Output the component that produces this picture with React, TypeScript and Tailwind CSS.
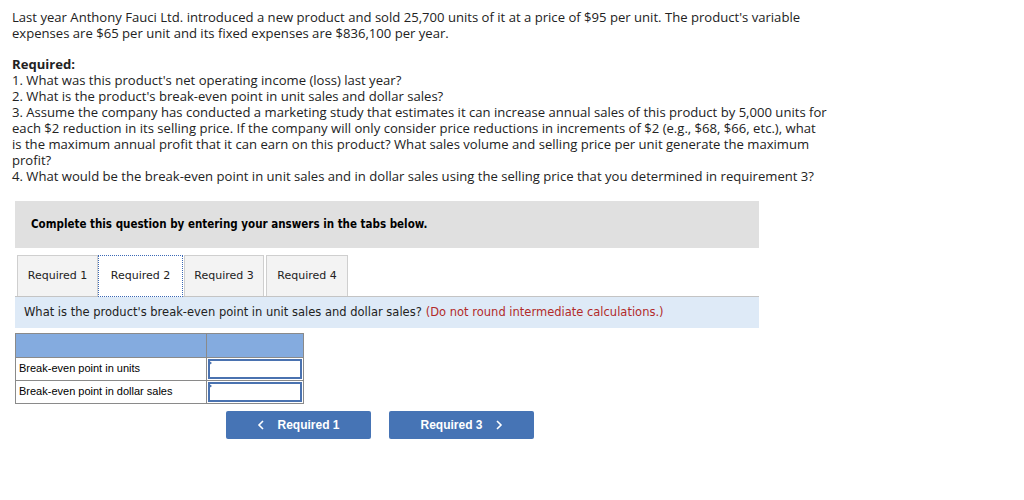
import React from "react";

const body = { fontFamily: '"Open Sans", "Liberation Sans", sans-serif' };
const verdana = { fontFamily: '"DejaVu Sans", Verdana, sans-serif' };
const verdanaC = { fontFamily: '"DejaVu Sans Condensed", "DejaVu Sans", Verdana, sans-serif' };
const arial = { fontFamily: '"Liberation Sans", Arial, sans-serif' };

function Tab({ label, active, cls }: { label: string; active?: boolean; cls: string }) {
  if (active) {
    return (
      <div className={`h-[42px] bg-white border border-dotted border-[#3b68b5] flex items-center justify-center text-[11px] text-[#222] mb-[-1px] ${cls}`} style={verdana}>
        {label}
      </div>
    );
  }
  return (
    <div className={`h-[41px] bg-[#f3f3f3] border border-[#cfcfcf] border-b-0 flex items-center justify-center text-[11px] text-[#222] ${cls}`} style={verdana}>
      {label}
    </div>
  );
}

function InputCell() {
  return (
    <div className="relative h-[22px] border-l border-[#8a8a8a] p-[1px]">
      <div className="h-full border-2 border-[#4a72b0] bg-white" />
      <div className="absolute left-[1px] top-[2px] w-0 h-0 border-t-[3px] border-b-[3px] border-l-[4px] border-t-transparent border-b-transparent border-l-[#4a72b0]" />
    </div>
  );
}

function Chevron({ dir }: { dir: "l" | "r" }) {
  return (
    <svg width="8" height="10" viewBox="0 0 8 10" fill="none" stroke="white" strokeWidth="1.6">
      {dir === "l" ? <path d="M6 1 L2 5 L6 9" /> : <path d="M2 1 L6 5 L2 9" />}
    </svg>
  );
}

export default function App() {
  return (
    <div className="w-[1024px] h-[500px] bg-white text-[#222] pt-[9px] pl-[12px]">
      <div className="text-[13.1px] leading-[16px] w-[840px]" style={body}>
        <p>
          Last year Anthony Fauci Ltd. introduced a new product and sold 25,700 units of it at a price of $95 per unit. The product's variable
          <br />
          expenses are $65 per unit and its fixed expenses are $836,100 per year.
        </p>
        <div className="mt-[15px]">
          <p className="font-bold">Required:</p>
          <p>1. What was this product's net operating income (loss) last year?</p>
          <p>2. What is the product's break-even point in unit sales and dollar sales?</p>
          <p>
            3. Assume the company has conducted a marketing study that estimates it can increase annual sales of this product by 5,000 units for
            <br />
            each $2 reduction in its selling price. If the company will only consider price reductions in increments of $2 (e.g., $68, $66, etc.), what
            <br />
            is the maximum annual profit that it can earn on this product? What sales volume and selling price per unit generate the maximum
            <br />
            profit?
          </p>
          <p>4. What would be the break-even point in unit sales and in dollar sales using the selling price that you determined in requirement 3?</p>
        </div>
      </div>

      <div className="ml-[3px] mt-[17px] w-[744px]">
        <div className="h-[47px] bg-[#e0e0e0] flex items-center pl-[16px] text-[11.5px] font-bold text-black" style={verdanaC}>
          Complete this question by entering your answers in the tabs below.
        </div>
        <div className="mt-[7px] flex items-end">
          <Tab label="Required 1" cls="ml-[2px] w-[81px]" />
          <Tab label="Required 2" active cls="w-[85px]" />
          <Tab label="Required 3" cls="ml-[1px] w-[80px]" />
          <Tab label="Required 4" cls="ml-[2px] w-[82px]" />
        </div>
        <div className="border-t border-[#c4c4c4] bg-[#deeaf7] h-[32px] flex items-center pl-[9px] text-[11.5px]" style={verdana}>
          <span className="text-[#222]">What is the product's break-even point in unit sales and dollar sales?</span>
          <span className="text-[#b22a2a] ml-[4px]">(Do not round intermediate calculations.)</span>
        </div>

        <div className="mt-[5px] w-[289px] border border-[#8a8a8a] text-[11px]" style={arial}>
          <div className="grid grid-cols-[190px_1fr] h-[24px] bg-[#84abdf] border-b border-[#8a8a8a]">
            <div />
            <div className="border-l border-[#8a8a8a]" />
          </div>
          <div className="grid grid-cols-[190px_1fr] border-b border-[#8a8a8a]">
            <div className="h-[21px] flex items-center pl-[3px] text-black">Break-even point in units</div>
            <InputCell />
          </div>
          <div className="grid grid-cols-[190px_1fr]">
            <div className="h-[21px] flex items-center pl-[3px] text-black">Break-even point in dollar sales</div>
            <InputCell />
          </div>
        </div>

        <div className="mt-[7px] flex gap-[18px] pl-[211px]" style={arial}>
          <button className="w-[145px] h-[28px] bg-[#4674b5] rounded-[2px] text-white text-[12px] font-bold flex items-center justify-center gap-[12px]">
            <Chevron dir="l" />
            <span>Required 1</span>
          </button>
          <button className="w-[145px] h-[28px] bg-[#4674b5] rounded-[2px] text-white text-[12px] font-bold flex items-center justify-center gap-[12px]">
            <span>Required 3</span>
            <Chevron dir="r" />
          </button>
        </div>
      </div>
    </div>
  );
}
